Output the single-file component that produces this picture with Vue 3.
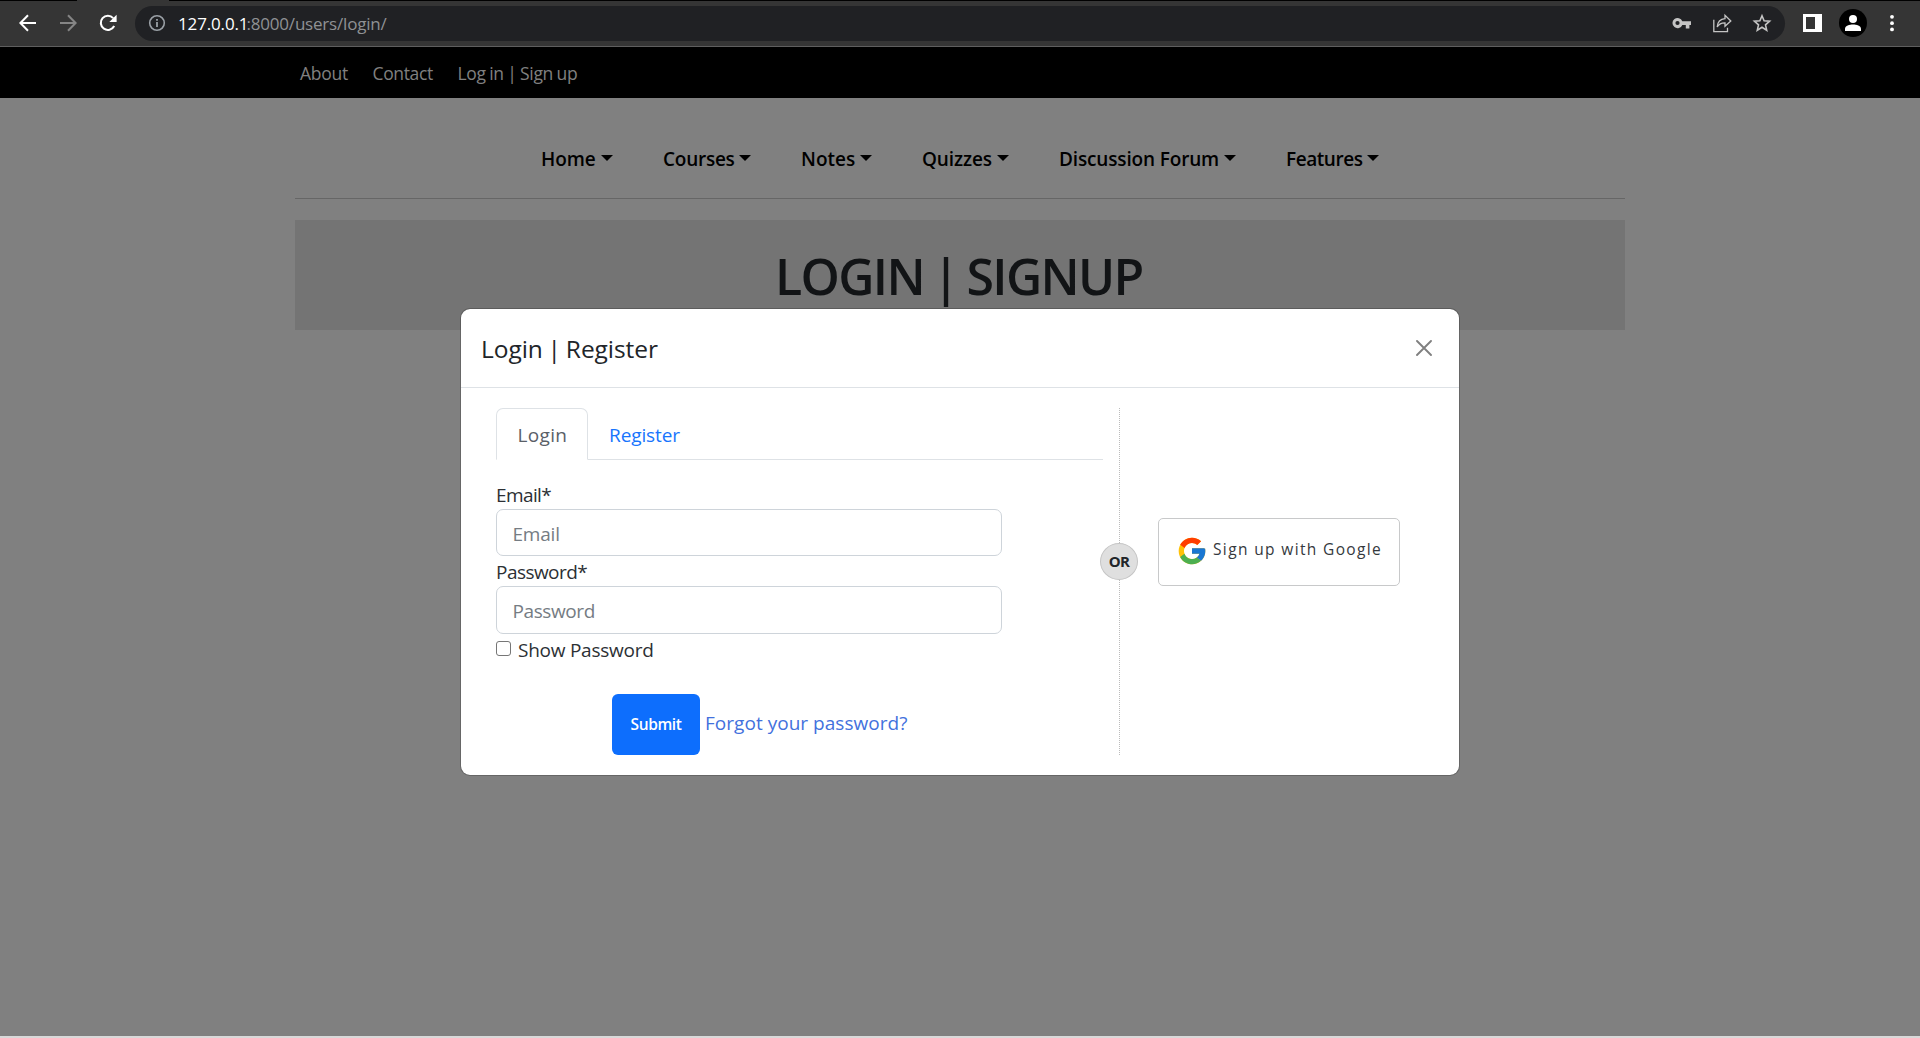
<script setup>
const links = [
  { label: 'About', cls: 'about' },
  { label: 'Contact', cls: 'contact' },
  { label: 'Log in | Sign up', cls: 'auth' }
]
const menu = [
  { label: 'Home', cls: 'home' },
  { label: 'Courses', cls: 'courses' },
  { label: 'Notes', cls: 'notes' },
  { label: 'Quizzes', cls: 'quizzes' },
  { label: 'Discussion Forum', cls: 'forum' },
  { label: 'Features', cls: 'features' }
]
</script>

<template>
  <div class="screen">
    <div class="tabstrip"><div class="tab"></div></div>
    <header class="toolbar">
      <svg class="nav-icon" width="20" height="20" viewBox="0 0 20 20" fill="none" stroke="#fff" stroke-width="2"><path d="M18 10H3M10 2.2L2.4 10l7.6 7.8" /></svg>
      <svg class="nav-icon" width="20" height="20" viewBox="0 0 20 20" fill="none" stroke="#858585" stroke-width="2"><path d="M2 10h15M10 2.2l7.6 7.8-7.6 7.8" /></svg>
      <svg class="nav-icon" width="20" height="20" viewBox="0 0 20 20"><path d="M16.2 13.1A7.1 7.1 0 1 1 15.2 5.1" fill="none" stroke="#fff" stroke-width="2.1" /><path d="M18.6 1.8v7.3h-7.3z" fill="#fff" /></svg>
      <div class="address">
        <svg class="info" width="18" height="18" viewBox="0 0 18 18"><circle cx="9" cy="9" r="7.3" fill="none" stroke="#9aa0a6" stroke-width="1.6" /><path d="M8.1 8h1.8v5H8.1zM8.1 5h1.8v1.8H8.1z" fill="#9aa0a6" /></svg>
        <span class="host">127.0.0.1</span><span class="path">:8000/users/login/</span>
        <span class="fill"></span>
        <svg class="key" width="20" height="20" viewBox="0 0 20 20"><path fill="#c4c4c4" fill-rule="evenodd" d="M10.3 8.2H19v3.7h-1.6v3.5h-3.6v-3.5h-3.5A5.1 5.1 0 1 1 10.3 8.2zM5.5 7.9a2.1 2.1 0 1 0 0 4.2 2.1 2.1 0 0 0 0-4.2z" /></svg>
        <svg class="share" width="20" height="20" viewBox="0 0 20 20" fill="none" stroke="#c4c4c4" stroke-width="1.3"><path d="M1.8 6.7v11.9h13.7v-3.8" /><path d="M5.2 14c.4-5.3 3.2-8 7.8-8.3V2.4L18.8 8 13 13.2V9.9c-3.7-.1-6 1.1-7.8 4.1z" /></svg>
        <svg class="star" width="20" height="20" viewBox="0 0 20 20" fill="none" stroke="#c4c4c4" stroke-width="1.6"><path d="M10 2.7l2.1 5 5.5.5-4.1 3.6 1.2 5.4-4.7-2.9-4.7 2.9 1.2-5.4-4.1-3.6 5.5-.5z" /></svg>
      </div>
      <svg class="panel" width="19" height="18" viewBox="0 0 19 18"><path fill="#fff" fill-rule="evenodd" d="M0 0h19v18H0zM3 3v12h9V3z" /></svg>
      <svg class="avatar" width="28" height="28" viewBox="0 0 28 28"><circle cx="14" cy="14" r="14" fill="#000" /><circle cx="14" cy="10" r="4" fill="#fff" /><path d="M6 22v-2.2c0-3.2 4.7-4.4 8-4.4s8 1.2 8 4.4V22z" fill="#fff" /></svg>
      <svg class="dots" width="4" height="18" viewBox="0 0 4 18" fill="#fff"><circle cx="2" cy="2.8" r="1.9" /><circle cx="2" cy="9.2" r="1.9" /><circle cx="2" cy="15.4" r="1.9" /></svg>
    </header>

    <nav class="topbar">
      <a v-for="l in links" :key="l.label" :class="l.cls">{{ l.label }}</a>
    </nav>

    <main class="page">
      <nav class="menu">
        <div v-for="m in menu" :key="m.label" class="menu-item">
          <span :class="['menu-label', m.cls]">{{ m.label }}</span><i class="caret"></i>
        </div>
      </nav>
      <div class="rule"></div>
      <h1 class="banner">LOGIN | SIGNUP</h1>
    </main>
    <footer class="bottom-edge"></footer>

    <section class="modal">
      <div class="modal-head">
        <h5>Login | Register</h5>
        <svg width="16" height="16" viewBox="0 0 16 16" stroke="#808080" stroke-width="1.9" stroke-linecap="round"><path d="M1 1l14 14M15 1L1 15" /></svg>
      </div>
      <div class="modal-body">
        <div class="left">
          <div class="tabs">
            <div class="tab-item active">Login</div>
            <div class="tab-item register">Register</div>
          </div>
          <label class="lbl first">Email*</label>
          <div class="field">Email</div>
          <label class="lbl second">Password*</label>
          <div class="field pass">Password</div>
          <div class="show"><span class="check"></span><span>Show Password</span></div>
          <div class="actions"><button class="submit">Submit</button><a>Forgot your password?</a></div>
        </div>
        <div class="divider"><span class="or">OR</span></div>
        <div class="google">
          <svg width="32" height="32" viewBox="0 0 48 48"><path fill="#FFC107" d="M43.611 20.083H42V20H24v8h11.303c-1.649 4.657-6.08 8-11.303 8-6.627 0-12-5.373-12-12s5.373-12 12-12c3.059 0 5.842 1.154 7.961 3.039l5.657-5.657C34.046 6.053 29.268 4 24 4 12.955 4 4 12.955 4 24s8.955 20 20 20 20-8.955 20-20c0-1.341-.138-2.65-.389-3.917z" /><path fill="#FF3D00" d="M6.306 14.691l6.571 4.819C14.655 15.108 18.961 12 24 12c3.059 0 5.842 1.154 7.961 3.039l5.657-5.657C34.046 6.053 29.268 4 24 4 16.318 4 9.656 8.337 6.306 14.691z" /><path fill="#4CAF50" d="M24 44c5.166 0 9.86-1.977 13.409-5.192l-6.19-5.238A11.91 11.91 0 0 1 24 36c-5.202 0-9.619-3.317-11.283-7.946l-6.522 5.025C9.505 39.556 16.227 44 24 44z" /><path fill="#1976D2" d="M43.611 20.083H42V20H24v8h11.303a12.04 12.04 0 0 1-4.087 5.571l6.19 5.238C36.971 39.205 44 34 44 24c0-1.341-.138-2.65-.389-3.917z" /></svg>
          <span>Sign up with Google</span>
        </div>
      </div>
    </section>
  </div>
</template>

<style>
body { margin: 0; background: #808080; overflow: hidden; }
</style>

<style scoped>
* { box-sizing: border-box; }
.screen {
  position: relative;
  width: 1920px;
  height: 1038px;
  display: flex;
  flex-direction: column;
  background: #808080;
  font-family: "Open Sans", "Noto Sans", sans-serif;
  font-size: 19px;
  white-space: nowrap;
}
svg { display: block; flex: none; }

.tabstrip { height: 1px; background: #000; padding-left: 77px; }
.tab { width: 92px; height: 1px; background: #353535; }
.toolbar {
  height: 46px;
  display: flex;
  align-items: center;
  padding: 0 25px 1px 17.5px;
  background: #353535;
  border-bottom: 1px solid #5f5f5f;
}
.nav-icon { margin-right: 20px; }
.nav-icon:nth-child(3) { margin-right: 17.5px; }
.address {
  width: 1650px;
  height: 35px;
  display: flex;
  align-items: center;
  padding: 0 13px 0 13px;
  border-radius: 18px;
  background: #202124;
  font-size: 17px;
}
.info { margin-right: 12px; }
.host, .path { line-height: 24px; padding-top: 1px; }
.host { color: #fff; width: 68.5px; letter-spacing: -0.15px; }
.path { color: #8f9194; letter-spacing: -0.2px; }
.fill { flex: 1; }
.key { margin-right: 20px; }
.share { margin-right: 20px; }
.panel { margin-left: 18px; }
.avatar { margin-left: 17px; }
.dots { margin-left: 23px; }

.topbar {
  height: 51px;
  display: flex;
  align-items: center;
  gap: 24px;
  padding: 0 0 0 300px;
  background: #000;
  color: #808080;
  font-size: 17.5px;
  line-height: 24px;
  letter-spacing: -0.25px;
}
.topbar .about { width: 48.5px; }
.topbar .contact { width: 61px; letter-spacing: -0.35px; }
.topbar .auth { letter-spacing: -0.3px; word-spacing: -0.8px; }

.page { flex: 1; padding: 0 295px; }
.menu {
  height: 100px;
  display: flex;
  gap: 49px;
  padding: 46px 0 0 246px;
  color: #000;
  font-weight: 600;
  line-height: 30px;
}
.menu-item { display: flex; }
.menu-label.home { width: 60px; letter-spacing: -0.05px; }
.menu-label.courses { width: 77px; padding-left: 1px; letter-spacing: -0.25px; }
.menu-label.notes { width: 60px; padding-left: 1px; }
.menu-label.quizzes { width: 76px; padding-left: 1px; letter-spacing: -0.1px; }
.menu-label.forum { width: 166px; padding-left: 1px; letter-spacing: -0.15px; }
.menu-label.features { width: 82px; padding-left: 1px; letter-spacing: -0.45px; }
.caret {
  width: 12px;
  height: 6px;
  margin-top: 11px;
  border: 6px solid transparent;
  border-top-color: #000;
  border-bottom: 0;
}
.rule { height: 1px; background: #666; }
.banner {
  height: 110px;
  margin: 21px 0 0;
  padding-left: 480px;
  background: #747474;
  color: #121416;
  font-size: 50px;
  font-weight: 600;
  line-height: 113px;
  letter-spacing: -1.65px;
  word-spacing: -3px;
}
.bottom-edge { height: 2px; background: #d9d9d9; }

.modal {
  position: absolute;
  left: 460px;
  top: 308px;
  width: 1000px;
  height: 468px;
  border: 1px solid rgba(0, 0, 0, 0.2);
  border-radius: 10px;
  background: #fff;
  background-clip: padding-box;
  color: #212529;
}
.modal-head {
  height: 79px;
  display: flex;
  align-items: center;
  justify-content: space-between;
  padding: 0 27px 0 20px;
  border-bottom: 1px solid #dee2e6;
}
.modal-head h5 {
  margin: 2px 0 0;
  font-size: 24.5px;
  font-weight: 500;
  line-height: 36px;
  letter-spacing: -0.05px;
  word-spacing: -1.5px;
}
.modal-body { display: flex; height: 387px; padding: 20px 0 0 35px; }
.left { width: 607px; }
.tabs { display: flex; height: 52px; border-bottom: 1px solid #dee2e6; }
.tab-item { height: 52px; line-height: 54px; }
.tab-item.active {
  width: 92px;
  padding-left: 20.5px;
  border: 1px solid #dee2e6;
  border-bottom-color: #fff;
  border-radius: 7px 7px 0 0;
  background: #fff;
  color: #5a6067;
  line-height: 52px;
  letter-spacing: 0.35px;
}
.tab-item.register { padding-left: 21px; color: #1775fd; letter-spacing: -0.1px; }
.lbl { display: block; height: 30px; line-height: 32px; color: #2c3034; }
.lbl.first { margin-top: 19px; letter-spacing: -0.6px; }
.lbl.second { letter-spacing: -0.55px; }
.field {
  width: 506px;
  height: 47px;
  padding-left: 15.5px;
  border: 1px solid #ced4da;
  border-radius: 7px;
  color: #757c83;
  line-height: 48px;
  letter-spacing: -0.2px;
}
.field.pass { height: 48px; line-height: 48px; letter-spacing: -0.4px; }
.show { display: flex; height: 30px; line-height: 32px; color: #2c3034; letter-spacing: -0.25px; }
.check {
  width: 15px;
  height: 15px;
  margin: 7px 7px 0 0;
  border: 1px solid #767676;
  border-radius: 3px;
}
.actions { display: flex; margin: 30px 0 0 116px; color: #4371dd; }
.actions a { margin-left: 5px; line-height: 59px; letter-spacing: 0.03px; }
.submit {
  width: 88px;
  height: 61px;
  padding: 0 0 2px;
  border: 0;
  border-radius: 6px;
  background: #0d6efd;
  color: #fff;
  font: 600 15.5px "Open Sans", sans-serif;
  letter-spacing: -0.4px;
}
.divider {
  position: relative;
  width: 1px;
  height: 347px;
  margin-left: 16px;
  background: repeating-linear-gradient(#bbb 0 1px, #fff 1px 2px);
}
.or {
  position: absolute;
  left: -19px;
  top: 135px;
  width: 38px;
  height: 37px;
  border: 1px solid #c5c5c5;
  border-radius: 50%;
  background: #dfdfdf;
  font-size: 15px;
  font-weight: 700;
  letter-spacing: -0.6px;
  line-height: 34px;
  text-align: center;
}
.google {
  width: 242px;
  height: 68px;
  display: flex;
  align-items: flex-start;
  margin: 110px 0 0 38px;
  padding: 16px 0 0 17px;
  border: 1px solid #c8c9ca;
  border-radius: 5px;
  color: #35393d;
}
.google span {
  margin-left: 5px;
  font-size: 15.5px;
  font-weight: 400;
  line-height: 29px;
  letter-spacing: 1.36px;
}
</style>
